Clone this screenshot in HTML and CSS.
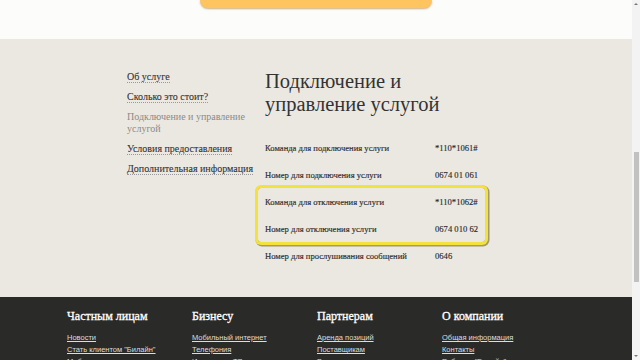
FILE: index.html
```html
<!DOCTYPE html>
<html lang="ru">

<head>
    <meta charset="UTF-8">
    <meta name="viewport" content="width=device-width, initial-scale=1.0">
    <title>Подключение и управление услугой</title>
    <link rel="stylesheet" href="styles.css">
</head>

<body>

    <div class="page">
        <div class="top">
            <div class="top-button"></div>
        </div>

        <div class="service">
            <div class="container">
                <ul class="side-menu">
                    <li><a href="#">Об услуге</a></li>
                    <li><a href="#">Сколько это стоит?</a></li>
                    <li class="active">Подключение и управление услугой</li>
                    <li><a href="#">Условия предоставления</a></li>
                    <li><a href="#">Дополнительная информация</a></li>
                </ul>

                <div class="content">
                    <h1>Подключение и управление услугой</h1>

                    <div class="params">
                        <div class="row">
                            <span class="label">Команда для подключения услуги</span>
                            <span class="value">*110*1061#</span>
                        </div>
                        <div class="row">
                            <span class="label">Номер для подключения услуги</span>
                            <span class="value">0674 01 061</span>
                        </div>

                        <!-- выделенный блок -->
                        <div class="highlight">
                            <div class="row">
                                <span class="label">Команда для отключения услуги</span>
                                <span class="value">*110*1062#</span>
                            </div>
                            <div class="row">
                                <span class="label">Номер для отключения услуги</span>
                                <span class="value">0674 010 62</span>
                            </div>
                        </div>

                        <div class="row">
                            <span class="label">Номер для прослушивания сообщений</span>
                            <span class="value">0646</span>
                        </div>
                    </div>
                </div>
            </div>
        </div>

        <div class="footer">
            <div class="footer-cols">
                <div class="footer-col">
                    <h4>Частным лицам</h4>
                    <a href="#">Новости</a>
                    <a href="#">Стать клиентом "Билайн"</a>
                    <a href="#">Мобильная связь</a>
                </div>
                <div class="footer-col">
                    <h4>Бизнесу</h4>
                    <a href="#">Мобильный интернет</a>
                    <a href="#">Телефония</a>
                    <a href="#">Интернет и ТВ</a>
                </div>
                <div class="footer-col">
                    <h4>Партнерам</h4>
                    <a href="#">Аренда позиций</a>
                    <a href="#">Поставщикам</a>
                    <a href="#">Владельцам</a>
                </div>
                <div class="footer-col">
                    <h4>О компании</h4>
                    <a href="#">Общая информация</a>
                    <a href="#">Контакты</a>
                    <a href="#">Работа в "Билайн"</a>
                </div>
            </div>
        </div>
    </div>

    <div class="scrollbar">
        <div class="scroll-up"></div>
        <div class="scroll-thumb"></div>
        <div class="scroll-down"></div>
    </div>

</body>

</html>
```

FILE: styles.css
```css
html,
body {
    margin: 0;
    padding: 0;
    height: 100%;
    overflow: hidden;
}

body {
    font-family: "Liberation Serif", serif;
    color: #333;
    background-color: #ebe8e2;
}

.page {
    width: 632px;
}

.top {
    height: 39px;
    background-color: #fcfcfa;
}

.top-button {
    width: 232px;
    height: 8px;
    margin: 0 auto;
    background-color: #fec45f;
    border-radius: 0 0 9px 9px;
    box-shadow: 0 1px 2px rgba(170, 110, 20, 0.55);
}

.service {
    height: 228px;
    padding-top: 30px;
    background-color: #ebe8e2;
}

.container {
    width: 378px;
    margin: 0 auto;
    display: flex;
}

.side-menu {
    width: 138px;
    list-style: none;
    margin: 0;
    padding: 2px 0 0;
    font-size: 10px;
    line-height: 12px;
}

.side-menu li {
    margin-bottom: 8px;
    padding-right: 10px;
}

.side-menu a {
    color: #333;
    text-decoration: none;
    border-bottom: 1px dotted #999;
    -webkit-text-stroke: 0.1px #333;
}

.side-menu .active {
    color: #8a8a86;
}

.content {
    flex: 1;
}

h1 {
    margin: 0;
    padding-top: 1px;
    width: 200px;
    font-size: 20.5px;
    line-height: 23px;
    font-weight: normal;
    color: #333;
}

.params {
    width: 213px;
    margin-top: 18px;
    font-size: 8.6px;
    white-space: nowrap;
    color: #2b2b2b;
    -webkit-text-stroke: 0.15px #2b2b2b;
}

.row {
    height: 27px;
    display: flex;
    align-items: center;
}

.label {
    width: 170px;
    flex-shrink: 0;
}

.value {
    flex: 1;
}

.highlight {
    margin: 0 -7px;
    padding: 0 7px;
    border-radius: 3px;
    box-shadow: 0 0 0 3px #f4e23c, 1px 1px 0 3.5px rgba(110, 100, 40, 0.6);
}

.footer {
    height: 63px;
    padding-top: 12px;
    background-color: #2a2b29;
    color: #fff;
}

.footer-cols {
    width: 500px;
    margin: 0 auto;
    padding-left: 2px;
    display: flex;
}

.footer-col {
    width: 125px;
    display: flex;
    flex-direction: column;
    align-items: flex-start;
}

.footer-col h4 {
    margin: 0 0 9px;
    font-size: 12px;
    line-height: 14px;
    font-weight: normal;
    -webkit-text-stroke: 0.3px #fff;
}

.footer-col a {
    font-family: "Liberation Sans", Arial, sans-serif;
    font-size: 7.5px;
    line-height: 12px;
    color: #ddd;
}

.scrollbar {
    position: fixed;
    top: 0;
    right: 0;
    width: 8px;
    height: 360px;
    background-color: #f3f3f3;
}

.scroll-thumb {
    position: absolute;
    top: 152px;
    left: 2px;
    width: 5px;
    height: 130px;
    background-color: #c1c1c1;
}

.scroll-up,
.scroll-down {
    position: absolute;
    left: 2px;
    width: 0;
    height: 0;
    border-left: 2px solid transparent;
    border-right: 2px solid transparent;
}

.scroll-up {
    top: 3px;
    border-bottom: 2px solid #777;
}

.scroll-down {
    bottom: 3px;
    border-top: 2px solid #777;
}
```
